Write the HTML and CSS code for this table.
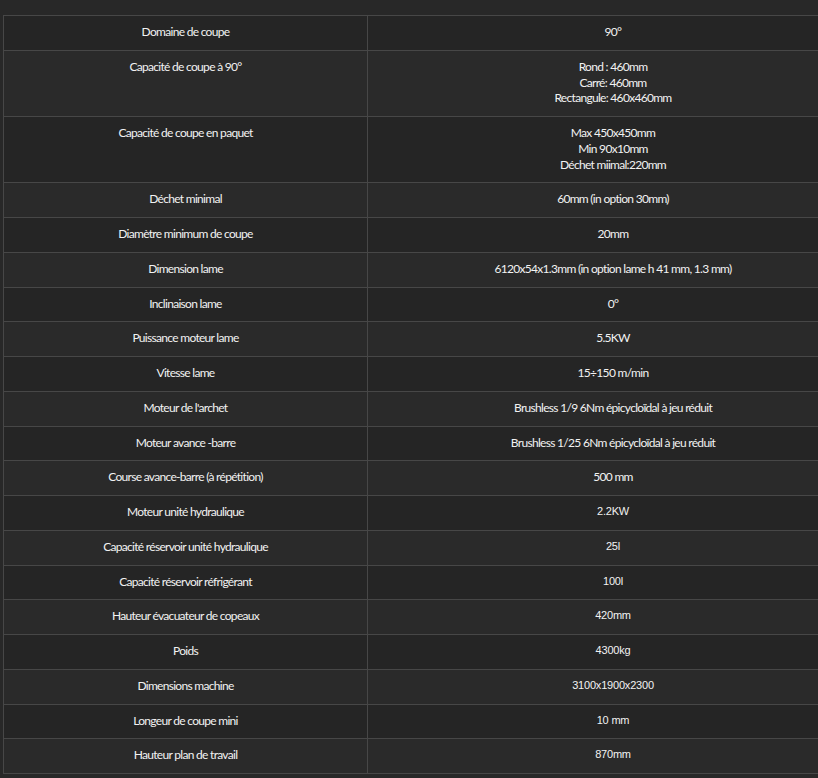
FILE: index.html
```html
<!DOCTYPE html>
<html lang="fr">
<head>
<meta charset="utf-8">
<title>Caractéristiques</title>
<link rel="stylesheet" href="styles.css">
</head>
<body>
<div class="wrap">
<table class="specs">
<tbody>
<tr><td>Domaine de coupe</td><td>90°</td></tr>
<tr><td>Capacité de coupe à 90°</td><td>Rond : 460mm<br>Carré: 460mm<br>Rectangule: 460x460mm</td></tr>
<tr><td>Capacité de coupe en paquet</td><td>Max 450x450mm<br>Min 90x10mm<br>Déchet miimal:220mm</td></tr>
<tr><td>Déchet minimal</td><td>60mm (in option 30mm)</td></tr>
<tr><td>Diamètre minimum de coupe</td><td>20mm</td></tr>
<tr><td>Dimension lame</td><td>6120x54x1.3mm (in option lame h 41 mm, 1.3 mm)</td></tr>
<tr><td>Inclinaison lame</td><td>0°</td></tr>
<tr><td>Puissance moteur lame</td><td>5.5KW</td></tr>
<tr><td>Vitesse lame</td><td>15÷150 m/min</td></tr>
<tr><td>Moteur de l'archet</td><td>Brushless 1/9 6Nm épicycloïdal à jeu réduit</td></tr>
<tr><td>Moteur avance -barre</td><td>Brushless 1/25 6Nm épicycloïdal à jeu réduit</td></tr>
<tr><td>Course avance-barre (à répétition)</td><td>500 mm</td></tr>
<tr><td>Moteur unité hydraulique</td><td class="arial">2.2KW</td></tr>
<tr><td>Capacité réservoir unité hydraulique</td><td class="arial">25l</td></tr>
<tr><td>Capacité réservoir réfrigérant</td><td class="arial">100l</td></tr>
<tr><td>Hauteur évacuateur de copeaux</td><td class="arial">420mm</td></tr>
<tr><td>Poids</td><td class="arial">4300kg</td></tr>
<tr><td>Dimensions machine</td><td class="arial">3100x1900x2300</td></tr>
<tr><td>Longeur de coupe mini</td><td class="arial">10 mm</td></tr>
<tr><td>Hauteur plan de travail</td><td class="arial">870mm</td></tr>
</tbody>
</table>
</div>
</body>
</html>
```
FILE: styles.css
```css
html, body {
  margin: 0;
  padding: 0;
  background: #282828;
  overflow: hidden;
}
.wrap {
  width: 818px;
  overflow: hidden;
  padding: 15px 0 0 3px;
  box-sizing: border-box;
}
.specs {
  width: 856px;
  border-collapse: collapse;
  table-layout: fixed;
  font-family: Lato, "Liberation Sans", sans-serif;
  font-size: 12px;
  line-height: 15.75px;
  color: #f2f2f2;
  letter-spacing: -0.7px;
}
.specs td {
  border: 1px solid #474747;
  padding: 8px 10px 10px;
  text-align: center;
  vertical-align: top;
}
.specs td:first-child {
  width: 343px;
}
.specs tr:nth-child(odd) td {
  background: #252525;
}
.specs tr:nth-child(even) td {
  background: #2a2a2a;
}
.specs td.arial {
  font-family: "Liberation Sans", Arial, sans-serif;
  font-size: 11px;
  letter-spacing: -0.2px;
}
```
